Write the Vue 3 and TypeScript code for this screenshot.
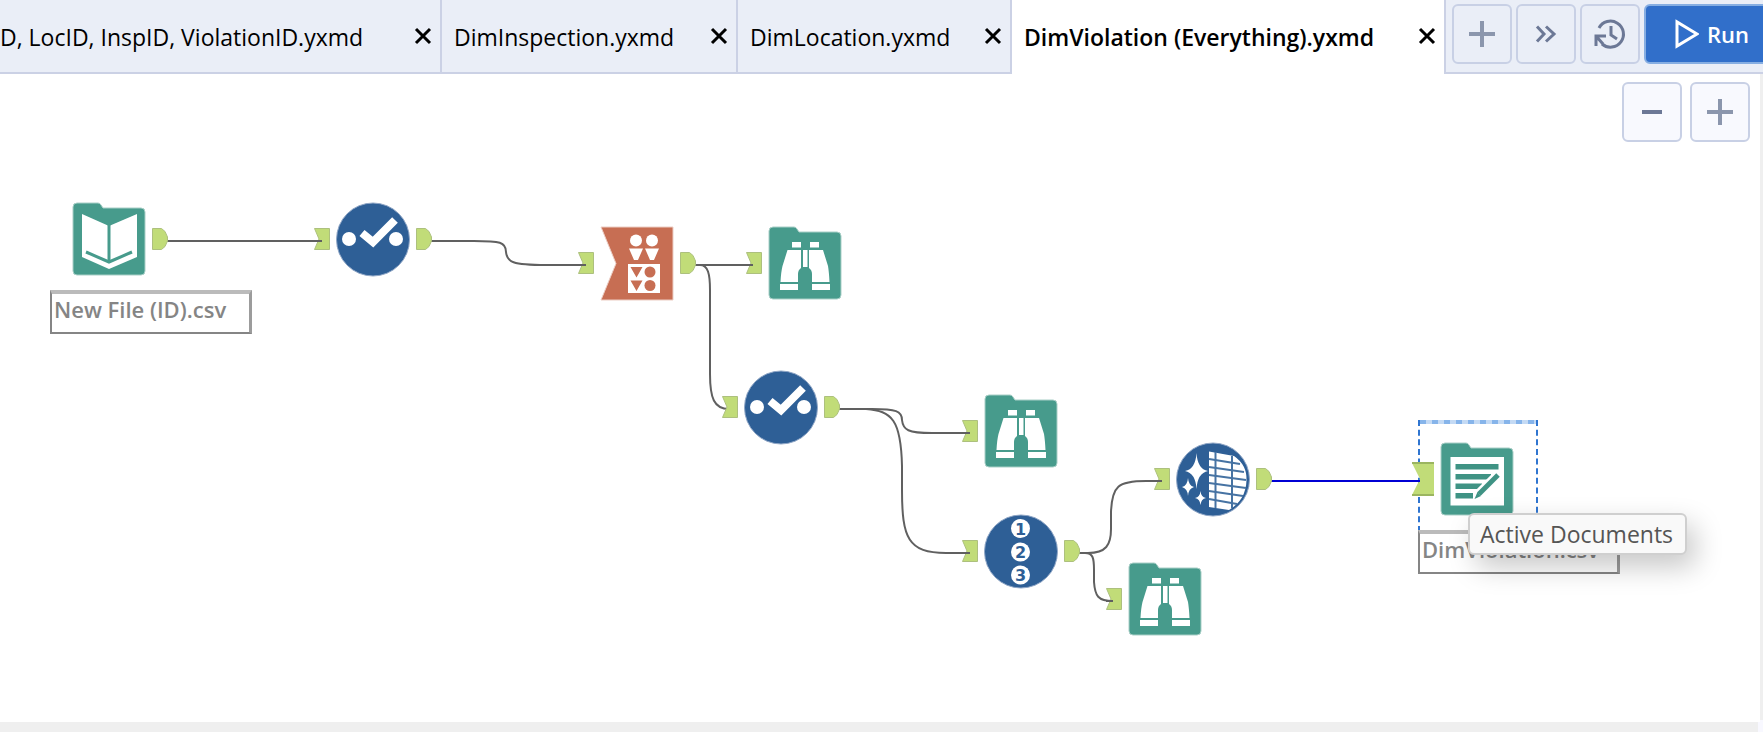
<script setup lang="ts">
type Kind = 'input' | 'select' | 'arrange' | 'browse' | 'record' | 'cleanse' | 'output'

interface Tab {
  title: string
  width: number
  active?: boolean
  clipped?: boolean
}

interface ToolNode {
  id: string
  kind: Kind
  label: string
  x: number
  y: number
  hasIn: boolean
  hasOut: boolean
}

const tabs: Tab[] = [
  { title: 'D, LocID, InspID, ViolationID.yxmd', width: 442, clipped: true },
  { title: 'DimInspection.yxmd', width: 296 },
  { title: 'DimLocation.yxmd', width: 274 },
  { title: 'DimViolation (Everything).yxmd', width: 432, active: true },
]

const nodes: ToolNode[] = [
  { id: 'n1', kind: 'input', label: 'Input Data', x: 72, y: 128, hasIn: false, hasOut: true },
  { id: 'n2', kind: 'select', label: 'Select', x: 336, y: 128, hasIn: true, hasOut: true },
  { id: 'n3', kind: 'arrange', label: 'Arrange', x: 600, y: 152, hasIn: true, hasOut: true },
  { id: 'n4', kind: 'browse', label: 'Browse', x: 768, y: 152, hasIn: true, hasOut: false },
  { id: 'n5', kind: 'select', label: 'Select', x: 744, y: 296, hasIn: true, hasOut: true },
  { id: 'n6', kind: 'browse', label: 'Browse', x: 984, y: 320, hasIn: true, hasOut: false },
  { id: 'n7', kind: 'record', label: 'Record ID', x: 984, y: 440, hasIn: true, hasOut: true },
  { id: 'n8', kind: 'cleanse', label: 'Data Cleansing', x: 1176, y: 368, hasIn: true, hasOut: true },
  { id: 'n9', kind: 'browse', label: 'Browse', x: 1128, y: 488, hasIn: true, hasOut: false },
  { id: 'n10', kind: 'output', label: 'Output Data', x: 1440, y: 368, hasIn: false, hasOut: false },
]

const wires: string[] = [
  'M167 167H322',
  'M431 167H474C500 167 506 168 506 178C507 188 512 191 546 191H586',
  'M695 191H753',
  'M695 191H700C708 191 710 200 710 216V300C710 324 714 335 729 335',
  'M839 335H872C896 335 902 337 902 346C903 356 908 359 932 359H970',
  'M839 335H866C892 337 901 346 902 392V416C902 464 908 479 946 479H970',
  'M1079 479H1088C1106 479 1111 471 1111 455V438C1112 412 1118 407 1146 407H1162',
  'M1079 479H1085C1093 479 1094 484 1094 496V508C1095 522 1098 527 1113 527',
]

const rows = [
  { y: 17, end: 64 },
  { y: 25, end: 68 },
  { y: 33, end: 70 },
  { y: 41, end: 70 },
  { y: 49, end: 67 },
  { y: 57, end: 61 },
]

const folder = 'M5 1H26Q28 1 29 3L31 6H69Q73 6 73 10V69Q73 73 69 73H5Q1 73 1 69V5Q1 1 5 1Z'
</script>

<template>
  <div class="app">
    <header class="bar">
      <nav class="tabs" aria-label="Open workflows">
        <div
          v-for="tab in tabs"
          :key="tab.title"
          class="tab"
          :class="{ active: tab.active, clipped: tab.clipped }"
          :style="{ width: tab.width + 'px' }"
        >
          <a href="#" class="title">{{ tab.title }}</a>
          <button class="close" type="button" aria-label="Close tab">
            <svg width="18" height="18" viewBox="0 0 18 18"><path d="M2 2L16 16M16 2L2 16" /></svg>
          </button>
        </div>
      </nav>
      <div class="tools">
        <button class="tool" type="button" aria-label="New workflow">
          <svg width="32" height="32" viewBox="0 0 32 32"><path class="soft" d="M16 3V29M3 16H29" /></svg>
        </button>
        <button class="tool" type="button" aria-label="More tabs">
          <svg width="32" height="32" viewBox="0 0 32 32"><path class="line" d="M7 8.500L14 16L7 23.500M16 8.500L24 16L16 23.500" /></svg>
        </button>
        <button class="tool" type="button" aria-label="History">
          <svg width="34" height="34" viewBox="0 0 34 34">
            <path class="line" d="M6 11A13 13 0 1 1 9 27" />
            <path class="line" d="M18 9V18L24 22" />
            <path class="line" d="M3 29V19H13M3 19L10 27" />
          </svg>
        </button>
        <button class="run" type="button">
          <svg width="24" height="30" viewBox="0 0 24 30"><path d="M2 3V27L22 15Z" /></svg>
          <span>Run</span>
        </button>
      </div>
    </header>

    <main class="stage">
      <section class="canvas" aria-label="Workflow canvas">
        <svg class="wires" aria-hidden="true">
          <path v-for="d in wires" :key="d" :d="d" />
          <path class="live" d="M1271 407H1420" />
        </svg>

        <div class="selection"></div>

        <div
          v-for="n in nodes"
          :key="n.id"
          class="node"
          :style="{ left: n.x + 'px', top: n.y + 'px' }"
        >
          <svg v-if="n.hasIn" class="port in" viewBox="0 0 16 22"><path d="M0.500 0.500H15.500V21.500H0.500L5 11Z" /></svg>
          <svg class="icon" viewBox="0 0 74 75" role="img" :aria-label="n.label">
            <g v-if="n.kind === 'input'">
              <path class="teal" :d="folder" />
              <path class="white" d="M10 12L37 24L65 12V55L37 67L10 55Z" />
              <path class="teal-line" d="M37 23V60" />
              <path class="teal-line" d="M14 50L37 60L60 50" />
            </g>
            <g v-else-if="n.kind === 'select'">
              <circle class="blue" cx="37" cy="37.500" r="36.500" />
              <circle class="white" cx="13" cy="37" r="7" />
              <circle class="white" cx="60" cy="37" r="7" />
              <path class="check" d="M26 31L37 40L59 18" />
            </g>
            <g v-else-if="n.kind === 'arrange'">
              <path class="orange" d="M1 1H73V74H1L16 37.500Z" />
              <circle class="white" cx="36" cy="14.500" r="6" />
              <circle class="white" cx="52" cy="14.500" r="6" />
              <path class="white" d="M29 22.500H43L38 34H34ZM45 22.500H59L54 34H50Z" />
              <path class="white" d="M28 38H60V67H28Z" />
              <path class="rust" d="M30.500 41H42.500L36.500 51.500ZM30.500 54.500H42.500L36.500 65Z" />
              <circle class="rust" cx="50" cy="46" r="5.500" />
              <circle class="rust" cx="50" cy="59.500" r="5.500" />
            </g>
            <g v-else-if="n.kind === 'browse'">
              <path class="teal" :d="folder" />
              <path class="white" d="M24 16H33V21.500H24ZM42 16H51V21.500H42Z" />
              <path class="white" d="M19.500 24H33V42Q30 44 30 48V56H12.500Q13 46 14.500 40Z" />
              <path class="white" d="M41 24H55L60 40Q61 46 61.500 56H44V48Q44 44 41 42Z" />
              <path class="white" d="M35 24H39.500V41H35Z" />
              <path class="white" d="M12 58H30V64H12ZM44 58H62V64H44Z" />
            </g>
            <g v-else-if="n.kind === 'record'">
              <circle class="blue" cx="37" cy="37.500" r="36.500" />
              <circle class="white" cx="36.500" cy="14.500" r="9.500" />
              <circle class="white" cx="36.500" cy="38" r="9.500" />
              <circle class="white" cx="36.500" cy="61" r="9.500" />
              <text x="36.500" y="20.500">1</text>
              <text x="36.500" y="44">2</text>
              <text x="36.500" y="67">3</text>
            </g>
            <g v-else-if="n.kind === 'cleanse'">
              <circle class="blue" cx="37" cy="37.500" r="36.500" />
              <path class="white" d="M20.500 11Q21.500 27 32 29Q21.500 31 20.500 47Q19.500 31 9 29Q19.500 27 20.500 11Z" />
              <path class="white" d="M12 36Q12.500 43.500 18 45Q12.500 46.500 12 54Q11.500 46.500 6 45Q11.500 43.500 12 36Z" />
              <path class="white" d="M24.500 49Q25 55 30 56Q25 57 24.500 63Q24 57 19 56Q24 55 24.500 49Z" />
              <path class="white" d="M33 9.500L58 14Q71 23 70.500 38Q70 58 53 68L33 65Z" />
              <path class="grid" d="M39.500 10V66M56 14V66" />
              <path v-for="r in rows" :key="r.y" class="grid" :d="`M33 ${r.y}L${r.end} ${r.y + 5}`" />
            </g>
            <g v-else>
              <path class="teal" :d="folder" />
              <path class="white" d="M10.500 15H64V63.500H10.500Z" />
              <path class="dark" d="M15.500 22H58.500V27.500H15.500ZM15.500 32H51V37.500H15.500ZM15.500 41.500H42V47H15.500ZM15.500 51H33V56.500H15.500Z" />
              <path class="halo" d="M58 33L38 53" />
              <path class="pencil" d="M58 33L39 52" />
              <path class="dark" d="M37.500 50L41 54L34.500 57Z" />
            </g>
          </svg>
          <svg v-if="n.hasOut" class="port out" viewBox="0 0 16 22"><path d="M0.500 0.500H9.500L13 3.500L15.500 9V13L13 18.500L9.500 21.500H0.500Z" /></svg>
        </div>

        <svg class="big-port" viewBox="0 0 22 34"><path d="M0 1H22V33H0L8 17Z" /><path class="edge" d="M0 1H22M0 33H22" /></svg>
        <svg class="wires" aria-hidden="true">
          <path d="M314 167H322M578 191H586M746 191H753M962 359H970M962 479H970M1154 407H1162M1106 527H1113" />
          <path class="live" d="M1410 407H1420" />
        </svg>

        <div class="note note-in">New File (ID).csv</div>
        <div class="note note-out">DimViolation.csv</div>
        <div class="tip" role="tooltip">Active Documents</div>

        <div class="zoom">
          <button class="tool" type="button" aria-label="Zoom out">
            <svg width="32" height="32" viewBox="0 0 32 32"><path class="line minus" d="M6 16H26" /></svg>
          </button>
          <button class="tool" type="button" aria-label="Zoom in">
            <svg width="32" height="32" viewBox="0 0 32 32"><path class="soft" d="M16 3V29M3 16H29" /></svg>
          </button>
        </div>
      </section>
      <div class="vscroll"></div>
    </main>
    <footer class="hscroll"></footer>
  </div>
</template>

<style>
body {
  margin: 0;
}
</style>

<style scoped>
.app {
  display: flex;
  flex-direction: column;
  height: 100vh;
  overflow: hidden;
  background: #f8f8ff;
  font-family: "Open Sans", "Noto Sans", sans-serif;
  color: #000;
}

.bar {
  display: flex;
  flex: none;
  height: 74px;
}

.tabs {
  display: flex;
  flex: none;
}

.tab {
  display: flex;
  align-items: center;
  justify-content: space-between;
  box-sizing: border-box;
  padding: 0 8px 0 12px;
  background: #eaeef7;
  border-right: 2px solid #cbd1e5;
  border-bottom: 2px solid #cbd1e5;
}

.tab.clipped {
  padding-left: 0;
}

.tab.active {
  background: #fff;
  border-right: 0;
  border-bottom-color: #fff;
}

.title {
  padding-top: 2px;
  font-size: 23px;
  line-height: 32px;
  color: inherit;
  text-decoration: none;
  white-space: nowrap;
}

.active .title {
  font-weight: 550;
}

button {
  margin: 0;
  padding: 0;
  font: inherit;
}

.close {
  width: 18px;
  height: 18px;
  border: 0;
  background: none;
}

.close svg {
  display: block;
  fill: none;
  stroke: #000;
  stroke-width: 3;
}

.tools {
  display: flex;
  flex: 1;
  gap: 4px;
  min-width: 0;
  box-sizing: border-box;
  padding: 4px 0 0 6px;
  overflow: hidden;
  background: #eaeef7;
  border-left: 2px solid #cbd1e5;
  border-bottom: 2px solid #cbd1e5;
}

.tool {
  display: flex;
  flex: none;
  align-items: center;
  justify-content: center;
  box-sizing: border-box;
  width: 60px;
  height: 60px;
  background: #eaeef7;
  border: 2px solid #c8d0e5;
  border-radius: 6px;
}

.soft,
.line {
  fill: none;
  stroke: #8b96ad;
  stroke-width: 4;
}

.line {
  stroke: #6c7896;
  stroke-width: 3;
}

.minus {
  stroke-width: 4;
}

.run {
  display: flex;
  flex: none;
  align-items: center;
  gap: 8px;
  box-sizing: border-box;
  width: 136px;
  height: 60px;
  padding-left: 29px;
  background: #316fca;
  border: 2px solid #86aee2;
  border-radius: 6px;
  color: #fff;
  font-size: 22px;
  line-height: 30px;
  font-weight: 600;
}

.run svg {
  fill: none;
  stroke: #fff;
  stroke-width: 3;
}

.stage {
  display: flex;
  flex: 1;
  min-height: 0;
}

.canvas {
  position: relative;
  flex: 1;
  min-width: 0;
  overflow: hidden;
  background: #fff;
}

.vscroll {
  width: 3px;
  margin-bottom: 2px;
  background: #efefef;
}

.hscroll {
  flex: none;
  height: 10px;
  margin-right: 5px;
  background: #efefef;
}

.wires {
  position: absolute;
  inset: 0;
  width: 100%;
  height: 100%;
  fill: none;
  stroke: #606060;
  stroke-width: 2;
}

.live {
  stroke: #0000d4;
}

.node {
  position: absolute;
  width: 74px;
  height: 75px;
}

.icon {
  display: block;
  width: 74px;
  height: 75px;
}

.port {
  position: absolute;
  top: 26px;
  width: 16px;
  height: 22px;
  fill: #c1dc78;
  stroke: #adc07e;
}

.port.in {
  left: -22px;
}

.port.out {
  left: 80px;
}

.big-port {
  position: absolute;
  left: 1412px;
  top: 388px;
  width: 22px;
  height: 34px;
  fill: #c1dc78;
}

.edge {
  stroke: #9bb560;
  stroke-width: 2;
}

.teal {
  fill: #479b8c;
  stroke: #a9cfc7;
}

.dark {
  fill: #3f9384;
}

.blue {
  fill: #2e5f96;
  stroke: #8fa6c6;
}

.orange {
  fill: #c76e53;
  stroke: #eccdc4;
}

.rust {
  fill: #c76e53;
}

.white {
  fill: #fff;
}

.teal-line {
  fill: none;
  stroke: #479b8c;
  stroke-width: 3;
}

.check {
  fill: none;
  stroke: #fff;
  stroke-width: 8;
}

.grid {
  fill: none;
  stroke: #4673a3;
  stroke-width: 2;
}

.pencil {
  stroke: #3f9384;
  stroke-width: 5;
}

.halo {
  stroke: #fff;
  stroke-width: 10;
}

.icon text {
  fill: #2e5f96;
  font-family: "DejaVu Sans", sans-serif;
  font-size: 16px;
  font-weight: 700;
  text-anchor: middle;
}

.selection {
  position: absolute;
  left: 1418px;
  top: 346px;
  box-sizing: border-box;
  width: 120px;
  height: 112px;
  border: 2px dashed #2f75d0;
  border-top: 0;
  border-bottom: 0;
}

.selection::before {
  content: "";
  display: block;
  height: 4px;
  background: repeating-linear-gradient(90deg, #86b4ea 0 6px, #c4daf4 6px 12px);
}

.note {
  position: absolute;
  box-sizing: border-box;
  width: 202px;
  height: 44px;
  padding: 0 2px;
  background: #fff;
  border: 2px solid #858585;
  border-top: 4px solid #bbb;
  border-right: 3px solid #9c9c9c;
  color: #858585;
  font-size: 22px;
  line-height: 30px;
  font-weight: 600;
  white-space: nowrap;
}

.note-in {
  left: 50px;
  top: 216px;
}

.note-out {
  left: 1418px;
  top: 456px;
}

.tip {
  position: absolute;
  left: 1468px;
  top: 439px;
  box-sizing: border-box;
  padding: 4px 12px 4px 10px;
  background: #f9f9f9;
  border: 2px solid #cfcfcf;
  border-radius: 6px;
  box-shadow: 8px 12px 28px rgba(0, 0, 0, 0.22);
  color: #555;
  font-size: 23px;
  line-height: 30px;
  white-space: nowrap;
}

.zoom {
  position: absolute;
  top: 8px;
  right: 10px;
  display: flex;
  gap: 8px;
}

.zoom .tool {
  background: #f8f9fe;
}
</style>
